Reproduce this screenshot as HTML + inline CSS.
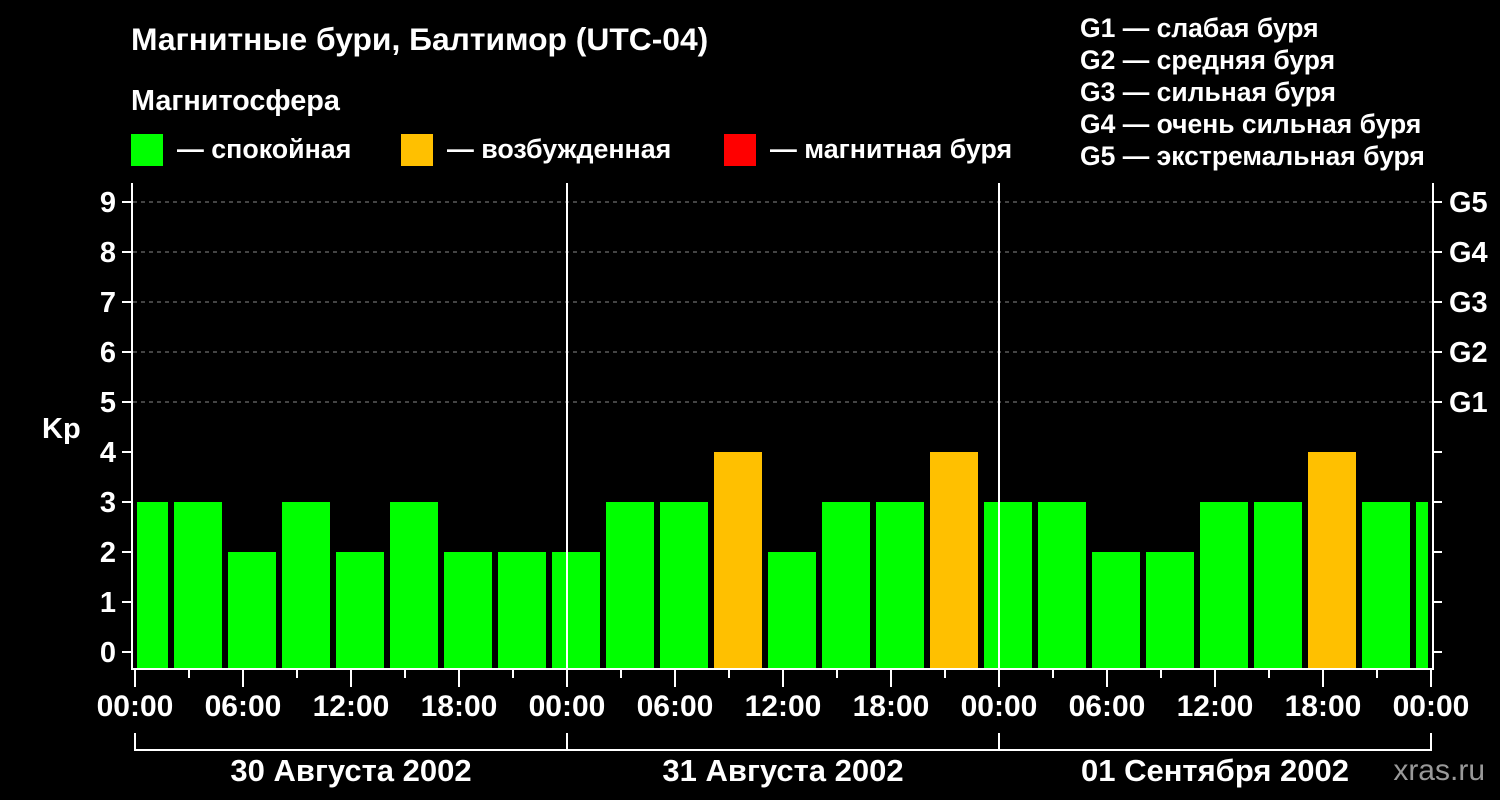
<!DOCTYPE html>
<html><head><meta charset="utf-8"><style>body{margin:0;background:#000}svg{display:block}text{font-family:"Liberation Sans",sans-serif;font-weight:bold;fill:#fff}</style></head><body>
<svg width="1500" height="800" viewBox="0 0 1500 800" xmlns="http://www.w3.org/2000/svg">
<rect width="1500" height="800" fill="#000"/>
<text x="131" y="50" font-size="31.8">Магнитные бури, Балтимор (UTC-04)</text>
<text x="131" y="110" font-size="28.8">Магнитосфера</text>
<rect x="131" y="134" width="32" height="32" fill="#00ff00"/><text x="177" y="158" font-size="26.8">— спокойная</text>
<rect x="401" y="134" width="32" height="32" fill="#ffc000"/><text x="447" y="158" font-size="26.8">— возбужденная</text>
<rect x="724" y="134" width="32" height="32" fill="#ff0000"/><text x="770" y="158" font-size="26.8">— магнитная буря</text>
<g font-size="26.5"><text x="1080" y="37">G1 — слабая буря</text><text x="1080" y="69">G2 — средняя буря</text><text x="1080" y="101">G3 — сильная буря</text><text x="1080" y="133">G4 — очень сильная буря</text><text x="1080" y="165">G5 — экстремальная буря</text></g>
<g stroke="#888" stroke-width="1" stroke-dasharray="4,4"><line x1="133" x2="1432" y1="202" y2="202"/><line x1="133" x2="1432" y1="252" y2="252"/><line x1="133" x2="1432" y1="302" y2="302"/><line x1="133" x2="1432" y1="352" y2="352"/><line x1="133" x2="1432" y1="402" y2="402"/></g>
<g fill="#00ff00">
<rect x="137" y="502" width="31" height="166"/>
<rect x="174" y="502" width="48" height="166"/>
<rect x="228" y="552" width="48" height="116"/>
<rect x="282" y="502" width="48" height="166"/>
<rect x="336" y="552" width="48" height="116"/>
<rect x="390" y="502" width="48" height="166"/>
<rect x="444" y="552" width="48" height="116"/>
<rect x="498" y="552" width="48" height="116"/>
<rect x="552" y="552" width="48" height="116"/>
<rect x="606" y="502" width="48" height="166"/>
<rect x="660" y="502" width="48" height="166"/>
<rect x="768" y="552" width="48" height="116"/>
<rect x="822" y="502" width="48" height="166"/>
<rect x="876" y="502" width="48" height="166"/>
<rect x="984" y="502" width="48" height="166"/>
<rect x="1038" y="502" width="48" height="166"/>
<rect x="1092" y="552" width="48" height="116"/>
<rect x="1146" y="552" width="48" height="116"/>
<rect x="1200" y="502" width="48" height="166"/>
<rect x="1254" y="502" width="48" height="166"/>
<rect x="1362" y="502" width="48" height="166"/>
<rect x="1416" y="502" width="12" height="166"/>
</g>
<g fill="#ffc000">
<rect x="714" y="452" width="48" height="216"/>
<rect x="930" y="452" width="48" height="216"/>
<rect x="1308" y="452" width="48" height="216"/>
</g>
<g stroke="#fff" stroke-width="2" fill="none">
<path d="M132 183V669H1433V183"/>
<line x1="567" y1="183" x2="567" y2="668"/><line x1="999" y1="183" x2="999" y2="668"/>
<path d="M135 733V750H1431V733M567 733V750M999 733V750"/>
<path d="M135 670V687M243 670V687M351 670V687M459 670V687M567 670V687M675 670V687M783 670V687M891 670V687M999 670V687M1107 670V687M1215 670V687M1323 670V687M1431 670V687"/>
<path d="M189 670V678M297 670V678M405 670V678M513 670V678M621 670V678M729 670V678M837 670V678M945 670V678M1053 670V678M1161 670V678M1269 670V678M1377 670V678"/>
<path d="M122 652H132M122 602H132M122 552H132M122 502H132M122 452H132M122 402H132M122 352H132M122 302H132M122 252H132M122 202H132"/>
<path d="M1433 652H1442M1433 602H1442M1433 552H1442M1433 502H1442M1433 452H1442M1433 402H1442M1433 352H1442M1433 302H1442M1433 252H1442M1433 202H1442"/>
</g>
<g font-size="29" text-anchor="end"><text x="116" y="662">0</text><text x="116" y="612">1</text><text x="116" y="562">2</text><text x="116" y="512">3</text><text x="116" y="462">4</text><text x="116" y="412">5</text><text x="116" y="362">6</text><text x="116" y="312">7</text><text x="116" y="262">8</text><text x="116" y="212">9</text></g>
<text x="42" y="438" font-size="29">Kp</text>
<g font-size="29"><text x="1449" y="212">G5</text><text x="1449" y="262">G4</text><text x="1449" y="312">G3</text><text x="1449" y="362">G2</text><text x="1449" y="412">G1</text></g>
<g font-size="30" text-anchor="middle">
<text x="135" y="716">00:00</text><text x="243" y="716">06:00</text><text x="351" y="716">12:00</text><text x="459" y="716">18:00</text>
<text x="567" y="716">00:00</text><text x="675" y="716">06:00</text><text x="783" y="716">12:00</text><text x="891" y="716">18:00</text>
<text x="999" y="716">00:00</text><text x="1107" y="716">06:00</text><text x="1215" y="716">12:00</text><text x="1323" y="716">18:00</text><text x="1431" y="716">00:00</text>
</g>
<g font-size="31" text-anchor="middle">
<text x="351" y="781">30 Августа 2002</text><text x="783" y="781">31 Августа 2002</text><text x="1215" y="781">01 Сентября 2002</text>
</g>
<text x="1485" y="780" font-size="30" text-anchor="end" style="fill:#999;font-weight:normal">xras.ru</text>
</svg>
</body></html>
